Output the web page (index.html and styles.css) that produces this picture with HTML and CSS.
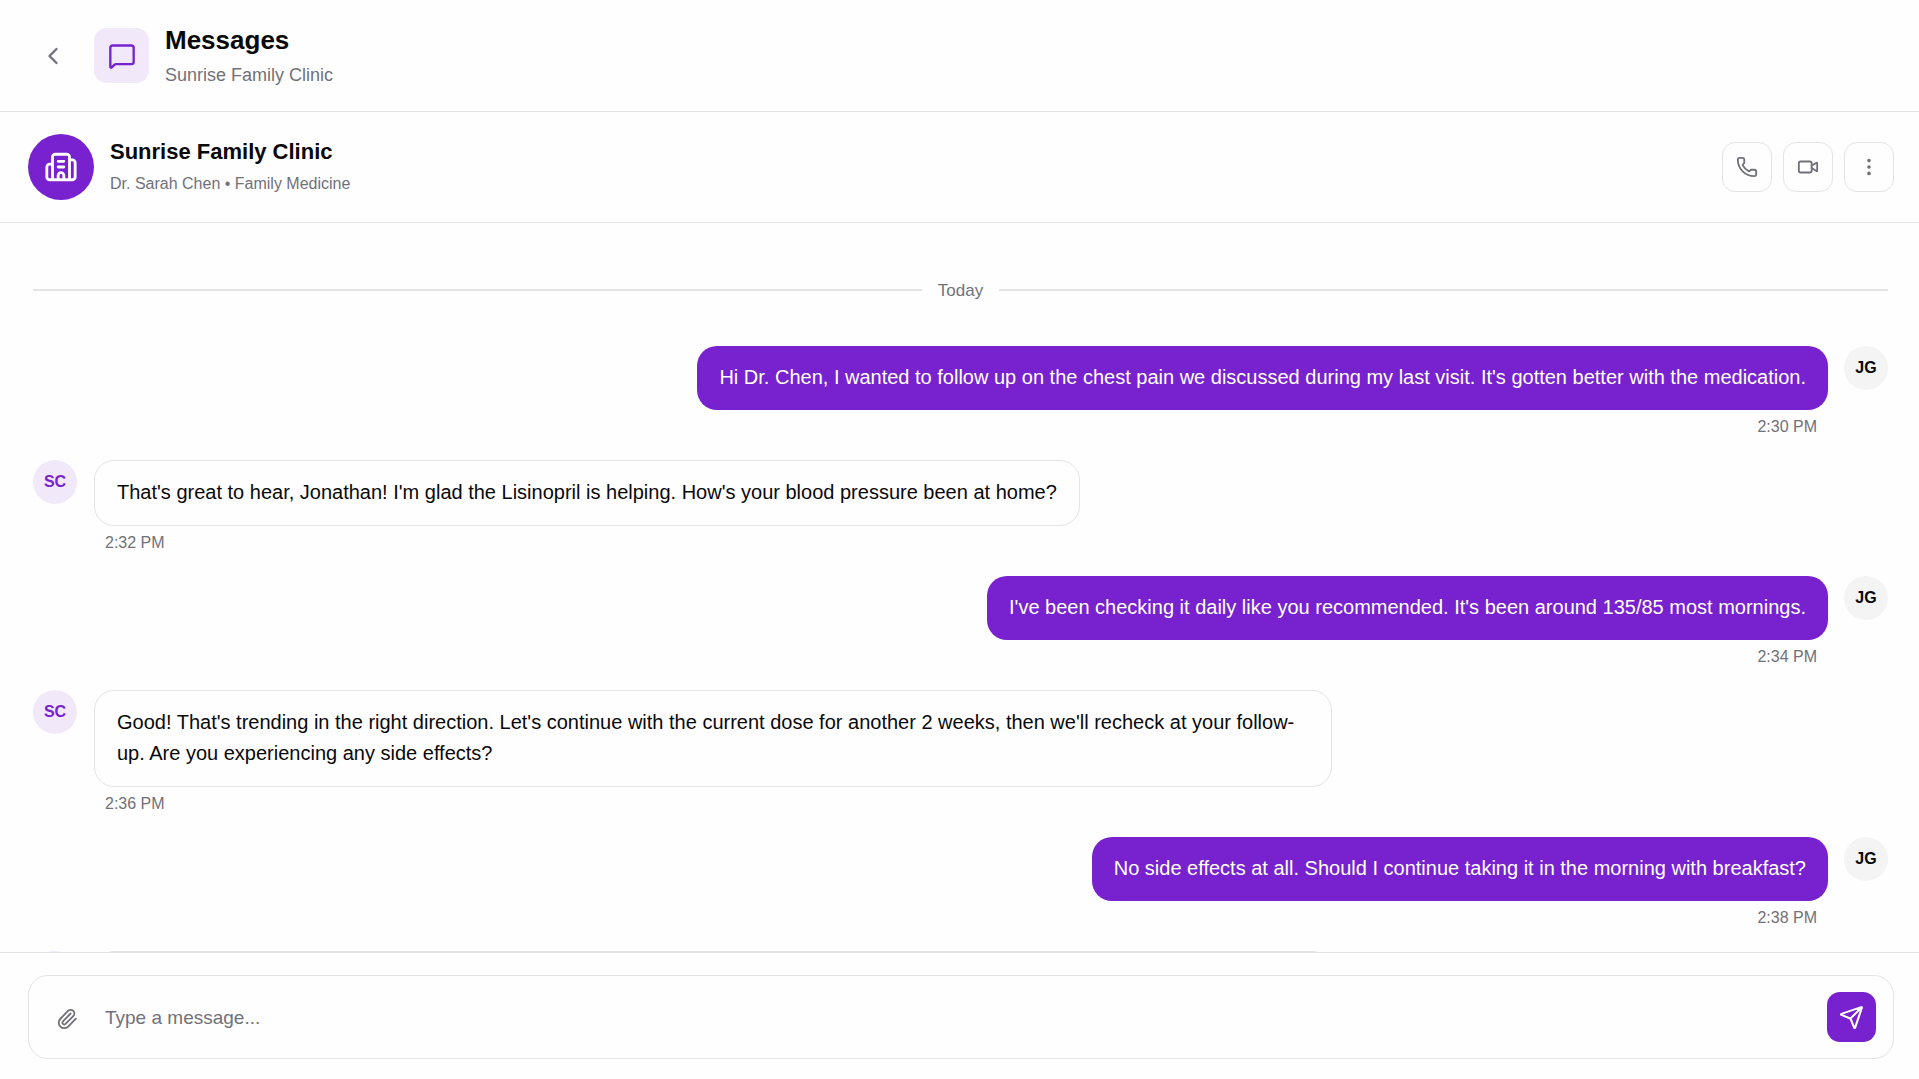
FILE: index.html
```html
<!DOCTYPE html>
<html lang="en">
<head>
<meta charset="utf-8">
<title>Messages - Sunrise Family Clinic</title>
<meta name="viewport" content="width=device-width, initial-scale=1">
<link rel="stylesheet" href="styles.css">
</head>
<body>
<div class="app">
  <header class="topbar">
    <button class="back" type="button" aria-label="Back">
      <svg class="icon icon-lg" viewBox="0 0 24 24"><path d="m15 18-6-6 6-6"/></svg>
    </button>
    <span class="topbar-badge">
      <svg class="icon icon-lg" viewBox="0 0 24 24"><path d="M22 17a2 2 0 0 1-2 2H6.828a2 2 0 0 0-1.414.586l-2.202 2.202A.71.71 0 0 1 2 21.286V5a2 2 0 0 1 2-2h16a2 2 0 0 1 2 2z"/></svg>
    </span>
    <div class="heading">
      <h1 class="page-title">Messages</h1>
      <p class="page-subtitle">Sunrise Family Clinic</p>
    </div>
  </header>

  <section class="contact" aria-label="Conversation">
    <span class="contact-avatar">
      <svg class="icon icon-xl" viewBox="0 0 24 24"><path d="M10 12h4M10 8h4M14 21v-3a2 2 0 0 0-4 0v3M6 10H4a2 2 0 0 0-2 2v7a2 2 0 0 0 2 2h16a2 2 0 0 0 2-2V9a2 2 0 0 0-2-2h-2M6 21V5a2 2 0 0 1 2-2h8a2 2 0 0 1 2 2v16"/></svg>
    </span>
    <div class="heading">
      <h2 class="contact-name">Sunrise Family Clinic</h2>
      <p class="contact-role">Dr. Sarah Chen • Family Medicine</p>
    </div>
    <div class="actions">
      <button class="action" type="button" aria-label="Call">
        <svg class="icon icon-md" viewBox="0 0 24 24"><path d="M13.832 16.568a1 1 0 0 0 1.213-.303l.355-.465A2 2 0 0 1 17 15h3a2 2 0 0 1 2 2v3a2 2 0 0 1-2 2A18 18 0 0 1 2 4a2 2 0 0 1 2-2h3a2 2 0 0 1 2 2v3a2 2 0 0 1-.8 1.6l-.468.351a1 1 0 0 0-.292 1.233 14 14 0 0 0 6.392 6.384"/></svg>
      </button>
      <button class="action" type="button" aria-label="Video call">
        <svg class="icon icon-md" viewBox="0 0 24 24"><path d="m16 13 5.223 3.482a.5.5 0 0 0 .777-.416V7.870a.5.5 0 0 0-.752-.432L16 10.500"/><rect x="2" y="6" width="14" height="12" rx="2"/></svg>
      </button>
      <button class="action" type="button" aria-label="More options">
        <svg class="icon icon-md" viewBox="0 0 24 24"><circle cx="12" cy="12" r="1"/><circle cx="12" cy="5" r="1"/><circle cx="12" cy="19" r="1"/></svg>
      </button>
    </div>
  </section>

  <main class="thread">
    <div class="day"><span class="day-label">Today</span></div>

    <article class="message sent">
      <span class="avatar">JG</span>
      <div class="message-body">
        <p class="bubble">Hi Dr. Chen, I wanted to follow up on the chest pain we discussed during my last visit. It's gotten better with the medication.</p>
        <time class="stamp">2:30 PM</time>
      </div>
    </article>

    <article class="message">
      <span class="avatar">SC</span>
      <div class="message-body">
        <p class="bubble">That's great to hear, Jonathan! I'm glad the Lisinopril is helping. How's your blood pressure been at home?</p>
        <time class="stamp">2:32 PM</time>
      </div>
    </article>

    <article class="message sent">
      <span class="avatar">JG</span>
      <div class="message-body">
        <p class="bubble">I've been checking it daily like you recommended. It's been around 135/85 most mornings.</p>
        <time class="stamp">2:34 PM</time>
      </div>
    </article>

    <article class="message">
      <span class="avatar">SC</span>
      <div class="message-body">
        <p class="bubble">Good! That's trending in the right direction. Let's continue with the current dose for another 2 weeks, then we'll recheck at your follow-up. Are you experiencing any side effects?</p>
        <time class="stamp">2:36 PM</time>
      </div>
    </article>

    <article class="message sent">
      <span class="avatar">JG</span>
      <div class="message-body">
        <p class="bubble">No side effects at all. Should I continue taking it in the morning with breakfast?</p>
        <time class="stamp">2:38 PM</time>
      </div>
    </article>

    <article class="message">
      <span class="avatar"></span>
      <div class="message-body">
        <p class="bubble bubble-full"></p>
      </div>
    </article>
  </main>

  <footer class="composer">
    <form class="composer-box">
      <button class="attach" type="button" aria-label="Attach a file">
        <svg class="icon icon-md" viewBox="0 0 24 24"><path d="m16 6-8.414 8.586a2 2 0 0 0 2.829 2.829l8.414-8.586a4 4 0 1 0-5.657-5.657l-8.379 8.551a6 6 0 1 0 8.485 8.485l8.379-8.551"/></svg>
      </button>
      <input class="composer-input" type="text" placeholder="Type a message..." aria-label="Message">
      <button class="send" type="submit" aria-label="Send">
        <svg class="icon icon-send" viewBox="0 0 24 24"><path d="M14.536 21.686a.5.5 0 0 0 .937-.024l6.500-19a.496.496 0 0 0-.635-.635l-19 6.500a.5.5 0 0 0-.024.937l7.930 3.180a2 2 0 0 1 1.112 1.110zM21.854 2.147l-10.940 10.939"/></svg>
      </button>
    </form>
  </footer>
</div>
</body>
</html>
```
FILE: styles.css
```css
:root {
  --purple: #7722ce;
  --lilac: #f1e8fa;
  --ink: #09090b;
  --muted: #71717a;
  --line: #e4e4e7;
  --paper: #fefefe;
}

* { box-sizing: border-box; }

body {
  margin: 0;
  background: var(--paper);
  color: var(--ink);
  font-family: "Liberation Sans", Arial, sans-serif;
}

h1, h2, p { margin: 0; }

button {
  display: flex;
  align-items: center;
  justify-content: center;
  padding: 0;
  border: 0;
  background: none;
  color: var(--muted);
  cursor: pointer;
}

.app {
  display: flex;
  flex-direction: column;
  height: 100vh;
}

.icon {
  display: block;
  fill: none;
  stroke: currentColor;
  stroke-width: 2;
  stroke-linecap: round;
  stroke-linejoin: round;
}
.icon-md { width: 22px; height: 22px; }
.icon-send { width: 25px; height: 25px; }
.icon-lg { width: 28px; height: 28px; }
.icon-xl { width: 34px; height: 34px; }

/* Page header */
.topbar {
  display: flex;
  align-items: center;
  gap: 16px;
  padding: 20px 28px;
  border-bottom: 1px solid var(--line);
}
.back { width: 50px; height: 50px; }
.topbar-badge {
  display: grid;
  place-items: center;
  width: 55px;
  height: 55px;
  border-radius: 13px;
  background: var(--lilac);
  color: var(--purple);
}
.heading { flex: 1; }
.page-title {
  font-size: 26px;
  font-weight: 700;
  line-height: 40px;
}
.page-subtitle {
  font-size: 18px;
  line-height: 31px;
  color: var(--muted);
}

/* Contact bar */
.contact {
  display: flex;
  align-items: center;
  gap: 16px;
  padding: 22px 25px 22px 28px;
  border-bottom: 1px solid var(--line);
}
.contact-avatar {
  display: grid;
  place-items: center;
  width: 66px;
  height: 66px;
  border-radius: 50%;
  background: var(--purple);
  color: #fff;
}
.contact-name {
  font-size: 22px;
  font-weight: 700;
  line-height: 34px;
}
.contact-role {
  font-size: 16px;
  line-height: 30px;
  color: var(--muted);
}
.actions { display: flex; gap: 11px; }
.action {
  width: 50px;
  height: 50px;
  border: 1px solid var(--line);
  border-radius: 13px;
}

/* Conversation */
.thread {
  flex: 1;
  min-height: 0;
  overflow: hidden;
  padding: 53px 31px 0 33px;
}
.day {
  display: flex;
  align-items: center;
  gap: 16px;
  margin-bottom: 42px;
}
.day::before,
.day::after {
  content: "";
  flex: 1;
  height: 2px;
  background: var(--line);
}
.day-label {
  padding-top: 2px;
  font-size: 17px;
  line-height: 26px;
  color: var(--muted);
}
.message {
  display: flex;
  gap: 17px;
  margin-bottom: 22px;
}
.sent {
  flex-direction: row-reverse;
  gap: 16px;
}
.avatar {
  flex: none;
  display: grid;
  place-items: center;
  width: 44px;
  height: 44px;
  border-radius: 50%;
  background: var(--lilac);
  color: var(--purple);
  font-size: 16px;
  font-weight: 700;
}
.sent .avatar {
  background: #f4f4f5;
  color: var(--ink);
}
.message-body {
  flex: 1;
  display: flex;
  flex-direction: column;
  align-items: flex-start;
}
.sent .message-body { align-items: flex-end; }
.bubble {
  max-width: 69%;
  padding: 16px 22px 17px;
  border: 1px solid var(--line);
  border-radius: 20px;
  font-size: 20px;
  line-height: 31px;
}
.bubble-full {
  width: 100%;
  min-height: 97px;
}
.sent .bubble {
  border: 0;
  background: var(--purple);
  color: #fff;
}
.stamp {
  margin: 6px 11px 0;
  font-size: 16px;
  line-height: 22px;
  color: var(--muted);
}

/* Message composer */
.composer {
  padding: 22px 25px 20px 28px;
  border-top: 1px solid var(--line);
}
.composer-box {
  display: flex;
  align-items: center;
  gap: 16px;
  padding: 16px 17px 16px 16px;
  border: 1px solid var(--line);
  border-radius: 20px;
}
.attach {
  width: 44px;
  height: 50px;
  padding-top: 4px;
}
.composer-input {
  flex: 1;
  min-width: 0;
  height: 50px;
  padding: 2px 0 0;
  border: 0;
  outline: 0;
  background: none;
  color: var(--ink);
  font: inherit;
  font-size: 19px;
}
.composer-input::placeholder {
  color: var(--muted);
  opacity: 1;
}
.send {
  width: 49px;
  height: 50px;
  border-radius: 13px;
  background: var(--purple);
  color: #fff;
}
```
